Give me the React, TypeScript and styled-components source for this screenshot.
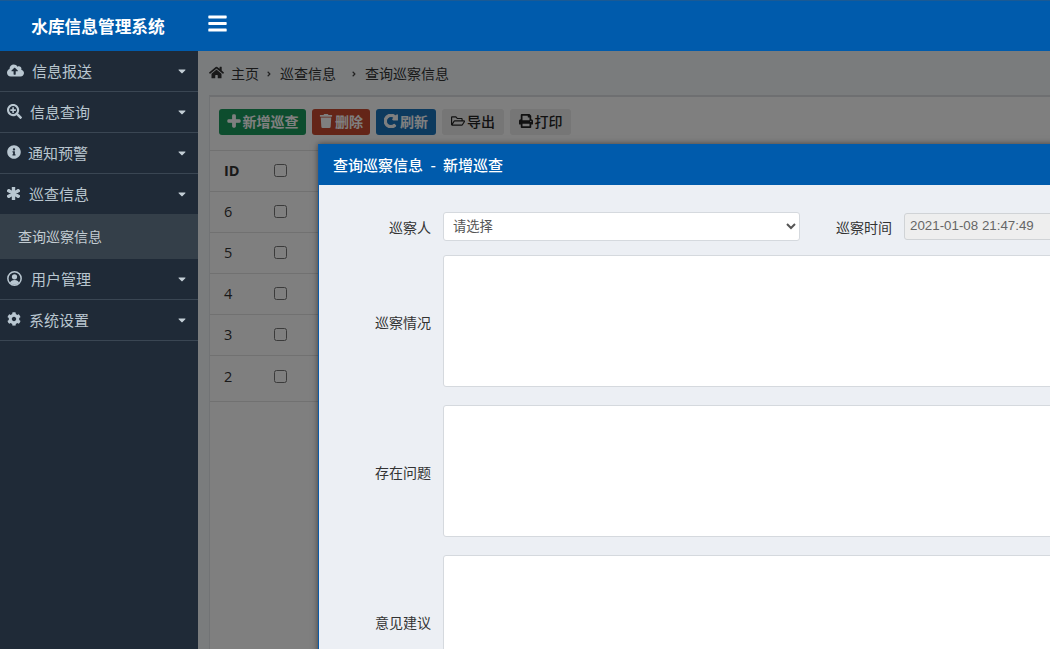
import React from "react";
import styled, { createGlobalStyle } from "styled-components";
import {
  FaBars, FaCaretDown, FaCloudUploadAlt, FaCog, FaHome, FaInfoCircle, FaPlus, FaPrint,
  FaRegFolderOpen, FaRedoAlt, FaSearchPlus, FaTrash, FaAsterisk, FaAngleRight,
} from "react-icons/fa";

const Global = createGlobalStyle`
  html, body { margin: 0; padding: 0; height: 100%; overflow: hidden; }
  body { font-family: "Noto Sans CJK SC", "Liberation Sans", sans-serif; }
  * { box-sizing: border-box; }
`;

const Shell = styled.div`
  width: 1050px; height: 649px; display: grid; grid-template-columns: 198px 1fr; overflow: hidden;
`;
const Sidebar = styled.aside`
  background: #1f2a37; display: flex; flex-direction: column; color: #b8c7ce;
`;
const Brand = styled.div`
  height: 51px; background: #005bac; border-top: 1px solid #1b5a94; color: #fff; font-size: 16.7px; font-weight: 700;
  display: flex; align-items: center; justify-content: center; padding-right: 2px;
`;
const NavItem = styled.div<{ $gap: number; $flat?: boolean }>`
  height: ${(p) => (p.$flat ? 40 : 41)}px; display: flex; align-items: center; padding: 0 10px 2px 7px; font-size: 15px;
  border-bottom: ${(p) => (p.$flat ? "0" : "1px solid #3a4653")}; gap: ${(p) => p.$gap}px; color: #b9c6cf;
  svg:first-child { flex: none; color: #b9c7d1; font-size: 15px; }
`;
const NavLabel = styled.span` flex: 1; `;
const Caret = styled(FaCaretDown)` font-size: 12px; color: #c3ced6; margin-top: 2px; `;
const SubItem = styled.div`
  height: 45px; background: #343f49; display: flex; align-items: center; padding: 0 0 2px 18px; font-size: 14px; color: #c3ccd2;
`;
const Right = styled.div` display: flex; flex-direction: column; min-width: 0; `;
const TopBar = styled.header`
  height: 51px; background: #005bac; border-top: 1px solid #1b5a94; padding: 0 0 5px 9px; display: flex; align-items: center;
  color: #fff; font-size: 21px; flex: none;
`;
const Main = styled.main`
  position: relative; flex: 1; background: #f4f8fb; overflow: hidden; padding: 0 0 0 11px;
`;
const Crumbs = styled.nav`
  height: 44px; display: flex; align-items: center; font-size: 14px; color: #333; padding-bottom: 1px;
`;
const HomeIcon = styled(FaHome)` font-size: 15px; margin-right: 7px; `;
const Sep = styled(FaAngleRight)<{ $l: number }>`
  font-size: 8px; margin: 2px 7px 0 ${(p) => p.$l}px; color: #444;
`;
const Card = styled.section`
  background: #fff; border-top: 2px solid #dcdfe2; border-left: 1px solid #e2e6ea; min-height: 600px;
`;
const Toolbar = styled.div`
  height: 53px; display: flex; align-items: center; gap: 6px; padding: 0 0 3px 9px;
`;
const Btn = styled.button<{ $bg: string; $fg: string; $w: number; $plain?: boolean }>`
  height: 26px; width: ${(p) => p.$w}px; border: 0; border-radius: 3px; background: ${(p) => p.$bg}; color: ${(p) => p.$fg};
  font: ${(p) => (p.$plain ? 500 : 700)} 14px "Noto Sans CJK SC", sans-serif; display: flex; align-items: center; justify-content: center; gap: 2px; padding: 0 0 2px;
  svg { font-size: 14px; flex: none; }
`;
const TableGrid = styled.div`
  display: grid; grid-template-columns: 50px 1fr;
`;
const Cell = styled.div<{ $h: number; $bold?: boolean; $last?: boolean }>`
  height: ${(p) => p.$h}px; display: flex; align-items: center; padding: 0 0 ${(p) => (p.$last ? 4 : 2)}px 14px; font-size: 14.5px; color: #333;
  border-top: 1px solid #e3e3e3; font-weight: ${(p) => (p.$bold ? 700 : 400)};
  font-family: "Open Sans", "Liberation Sans", sans-serif;
`;
const Check = styled.input.attrs({ type: "checkbox" })` margin: 0; width: 13px; height: 13px; `;
const Dim = styled.div`
  position: absolute; inset: 0; background: rgba(0, 0, 0, 0.5);
`;
const Modal = styled.div`
  position: absolute; left: 120px; top: 93px; width: 860px; height: 700px; background: #eceff4;
  border-left: 1px solid #0b5aa8; box-shadow: 0 0 6px rgba(0,0,0,.5);
`;
const ModalHead = styled.div`
  height: 41px; background: #005bac; color: #fff; font-size: 15px; font-weight: 500; display: flex; align-items: center; padding-left: 14px; word-spacing: 4px;
`;
const ModalBody = styled.div`
  padding: 27px 0 0; display: flex; flex-direction: column; gap: 18px;
`;
const Row = styled.div` display: flex; align-items: center; `;
const TopRow = styled(Row)` margin-bottom: -4px; label { padding-top: 0; } `;
const Label = styled.label<{ $w: number }>`
  width: ${(p) => p.$w}px; text-align: right; font-size: 14px; color: #333; flex: none; padding-top: 1px;
`;
const Select = styled.select`
  margin-left: 12px; width: 357px; height: 29px; border: 1px solid #d5d9de; border-radius: 3px; background: #fff; color: #555;
  font: 13.3px "Noto Sans CJK SC", sans-serif; padding: 0 0 2px 5px;
`;
const DateInput = styled.input`
  margin-left: 12px; width: 240px; height: 27px; border: 1px solid #d0d3d6; border-radius: 3px; background: #eee; color: #666;
  font: 13.33px "Liberation Sans", sans-serif; padding: 0 5px 2px;
`;
const Area = styled.textarea`
  margin-left: 12px; width: 720px; height: 132px; border: 1px solid #d5d9de; border-radius: 3px; background: #fff; resize: none; display: block;
`;
const Heavy = styled.span`
  display: inline-flex; svg { stroke: currentColor; stroke-width: 40px; }
`;

const UserRing = () => (
  <svg width="15" height="15" viewBox="0 0 16 16" aria-hidden="true">
    <defs>
      <clipPath id="ring"><circle cx="8" cy="8" r="6.6" /></clipPath>
    </defs>
    <circle cx="8" cy="8" r="7.1" fill="none" stroke="currentColor" strokeWidth="1.6" />
    <circle cx="8" cy="6.2" r="2.8" fill="currentColor" />
    <ellipse cx="8" cy="13.6" rx="5" ry="4" fill="currentColor" clipPath="url(#ring)" />
  </svg>
);

const nav: [React.ReactNode, string, number, boolean][] = [
  [<FaCloudUploadAlt key="a" style={{ fontSize: 17 }} />, "信息报送", 8, false],
  [<FaSearchPlus key="b" />, "信息查询", 8, false],
  [<FaInfoCircle key="c" style={{ fontSize: 14 }} />, "通知预警", 7, false],
  [<FaAsterisk key="d" style={{ fontSize: 13, stroke: "currentColor", strokeWidth: 50 }} />, "巡查信息", 9, true],
];
const nav2: [React.ReactNode, string, number, boolean][] = [
  [<UserRing key="e" />, "用户管理", 9, false],
  [<FaCog key="f" style={{ fontSize: 14 }} />, "系统设置", 8, false],
];
const rows = ["6", "5", "4", "3", "2"];

export default function App() {
  return (
    <Shell>
      <Global />
      <Sidebar>
        <Brand>水库信息管理系统</Brand>
        {nav.map(([i, t, g, f]) => (
          <NavItem key={t} $gap={g} $flat={f}>{i}<NavLabel>{t}</NavLabel><Caret /></NavItem>
        ))}
        <SubItem>查询巡察信息</SubItem>
        {nav2.map(([i, t, g, f]) => (
          <NavItem key={t} $gap={g} $flat={f}>{i}<NavLabel>{t}</NavLabel><Caret /></NavItem>
        ))}
      </Sidebar>
      <Right>
        <TopBar><FaBars /></TopBar>
        <Main>
          <Crumbs>
            <HomeIcon />主页<Sep $l={6} />巡查信息<Sep $l={14} />查询巡察信息
          </Crumbs>
          <Card>
            <Toolbar>
              <Btn $bg="#1a9a5c" $fg="#fff" $w={87}><Heavy><FaPlus /></Heavy>新增巡查</Btn>
              <Btn $bg="#c84a30" $fg="#fff" $w={58}><FaTrash />删除</Btn>
              <Btn $bg="#1a74bd" $fg="#fff" $w={60}><Heavy><FaRedoAlt /></Heavy>刷新</Btn>
              <Btn $plain $bg="#ececec" $fg="#222" $w={62}><FaRegFolderOpen />导出</Btn>
              <Btn $plain $bg="#ececec" $fg="#222" $w={61}><FaPrint />打印</Btn>
            </Toolbar>
            <TableGrid>
              <Cell $h={41} $bold>ID</Cell>
              <Cell $h={41}><Check /></Cell>
              {rows.map((r, i) => (
                <React.Fragment key={r}>
                  <Cell $h={i === 4 ? 46 : 41} $last={i === 4}>{r}</Cell>
                  <Cell $h={i === 4 ? 46 : 41} $last={i === 4}><Check /></Cell>
                </React.Fragment>
              ))}
              <Cell $h={1} />
              <Cell $h={1} />
            </TableGrid>
          </Card>
          <Dim />
          <Modal>
            <ModalHead>查询巡察信息 - 新增巡查</ModalHead>
            <ModalBody>
              <TopRow>
                <Label $w={112}>巡察人</Label>
                <Select defaultValue="">
                  <option value="">请选择</option>
                </Select>
                <Label $w={92}>巡察时间</Label>
                <DateInput disabled defaultValue="2021-01-08 21:47:49" />
              </TopRow>
              <Row><Label $w={112}>巡察情况</Label><Area /></Row>
              <Row><Label $w={112}>存在问题</Label><Area /></Row>
              <Row><Label $w={112}>意见建议</Label><Area /></Row>
            </ModalBody>
          </Modal>
        </Main>
      </Right>
    </Shell>
  );
}
